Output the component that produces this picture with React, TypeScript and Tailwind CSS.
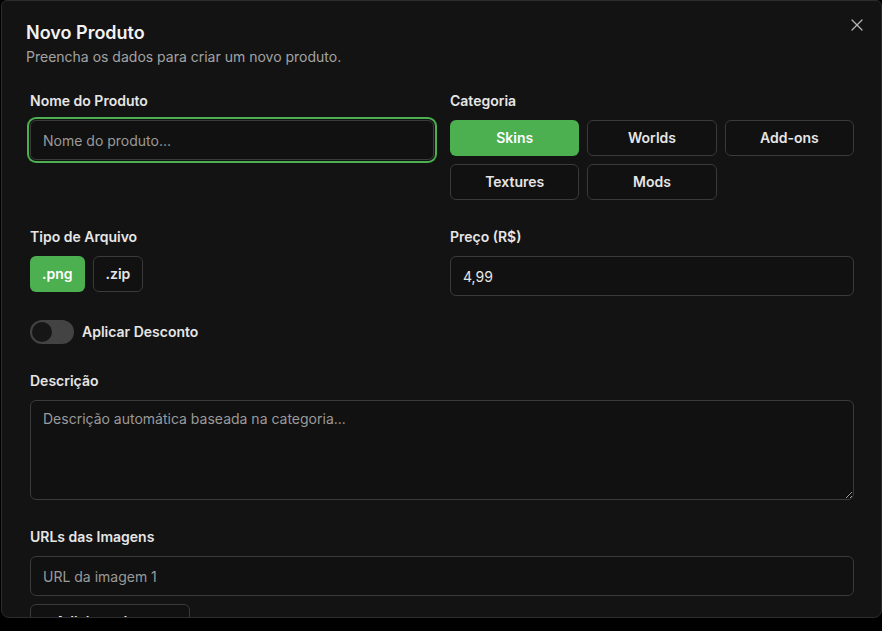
import { useState } from 'react'
import { X } from 'lucide-react'

const categories = ['Skins', 'Worlds', 'Add-ons', 'Textures', 'Mods']
const fileTypes = ['.png', '.zip']

function Label({ children }: { children: React.ReactNode }) {
  return <label className="block text-sm leading-5 font-semibold text-[#e6e6e6] mb-[9px]">{children}</label>
}

export default function App() {
  const [category, setCategory] = useState('Skins')
  const [fileType, setFileType] = useState('.png')
  const [discount, setDiscount] = useState(false)

  return (
    <div className="h-[631px] bg-black overflow-hidden" style={{ fontFamily: 'Inter, "Noto Sans", sans-serif' }}>
      <div className="relative ml-px h-[618px] overflow-hidden rounded-b-lg rounded-t-md border border-[#2c2c2c] bg-[#131313] pl-6 pr-[23px] pt-[18px]">
        <button className="absolute right-[14px] top-[14px] text-[#b5b5b5]">
          <X size={20} strokeWidth={1.5} />
        </button>

        <h2 className="text-lg leading-7 font-semibold text-[#f2f2f2]">Novo Produto</h2>
        <p className="text-sm leading-5 text-[#a3a3a3]">Preencha os dados para criar um novo produto.</p>

        <div className="mt-6 px-1 flex flex-col">
          <div className="grid grid-cols-2 gap-4">
            <div>
              <Label>Nome do Produto</Label>
              <input
                placeholder="Nome do produto..."
                className="w-full h-10 rounded-md border border-[#3a3a3a] bg-[#111111] px-3 text-sm text-[#e6e6e6] placeholder:text-[#9a9a9a] outline-none ring-2 ring-[#4caf50] ring-offset-1 ring-offset-[#131313]"
              />
            </div>
            <div>
              <Label>Categoria</Label>
              <div className="grid grid-cols-3 gap-2">
                {categories.map(c => (
                  <button
                    key={c}
                    onClick={() => setCategory(c)}
                    className={`h-9 rounded-md text-sm font-semibold ${category === c
                      ? 'bg-[#4caf50] text-white'
                      : 'border border-[#3a3a3a] bg-[#111111] text-[#e6e6e6]'}`}>
                    {c}
                  </button>
                ))}
              </div>
            </div>
          </div>

          <div className="grid grid-cols-2 gap-4 mt-[27px]">
            <div>
              <Label>Tipo de Arquivo</Label>
              <div className="flex gap-2">
                {fileTypes.map(t => (
                  <button
                    key={t}
                    onClick={() => setFileType(t)}
                    className={`h-9 rounded-md px-3 text-sm font-semibold ${fileType === t
                      ? 'bg-[#4caf50] text-white'
                      : 'border border-[#3a3a3a] bg-[#111111] text-[#e6e6e6]'}`}>
                    {t}
                  </button>
                ))}
              </div>
            </div>
            <div>
              <Label>Preço (R$)</Label>
              <input
                defaultValue="4,99"
                className="w-full h-10 rounded-md border border-[#3a3a3a] bg-[#111111] px-3 text-sm text-[#e6e6e6] outline-none"
              />
            </div>
          </div>

          <div className="mt-6 flex items-center gap-2">
            <button
              onClick={() => setDiscount(!discount)}
              className={`relative h-6 w-11 rounded-full ${discount ? 'bg-[#4caf50]' : 'bg-[#434343]'}`}>
              <span className={`absolute top-0.5 h-5 w-5 rounded-full bg-[#161616] ${discount ? 'left-[22px]' : 'left-0.5'}`} />
            </button>
            <span className="text-sm font-semibold text-[#e6e6e6]">Aplicar Desconto</span>
          </div>

          <div className="mt-[27px]">
            <Label>Descrição</Label>
            <textarea
              placeholder="Descrição automática baseada na categoria..."
              className="block w-full h-[100px] rounded-md border border-[#3a3a3a] bg-[#111111] px-3 py-2 text-sm text-[#e6e6e6] placeholder:text-[#9a9a9a] outline-none"
            />
          </div>

          <div className="mt-[27px]">
            <Label>URLs das Imagens</Label>
            <input
              placeholder="URL da imagem 1"
              className="w-full h-10 rounded-md border border-[#3a3a3a] bg-[#111111] px-3 text-sm text-[#e6e6e6] placeholder:text-[#9a9a9a] outline-none"
            />
            <button className="mt-2 h-9 w-40 rounded-md border border-[#3a3a3a] bg-[#111111] text-sm font-semibold text-[#e6e6e6]">
              + Adicionar Imagem
            </button>
          </div>
        </div>
      </div>
    </div>
  )
}
